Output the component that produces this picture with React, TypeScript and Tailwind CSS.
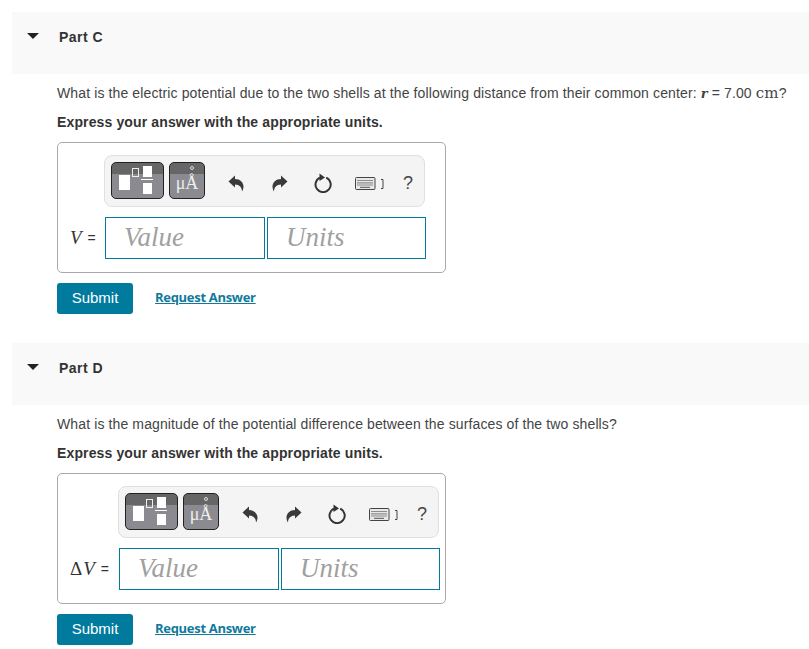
const serif = '[font-family:"Liberation_Serif",serif]';

function TemplateIcon() {
  return (
    <svg width="53" height="37" viewBox="0 0 53 37" className="block">
      <rect x="7" y="12" width="11" height="15" fill="#fff" />
      <rect x="20.5" y="5.5" width="6" height="8" fill="none" stroke="#eee" strokeWidth="1" />
      <rect x="31" y="3" width="9" height="11" fill="#fff" />
      <rect x="29" y="16" width="12" height="1" fill="#fff" />
      <rect x="31" y="20" width="9" height="11" fill="#fff" />
    </svg>
  );
}

function Undo({ flip }: { flip?: boolean }) {
  return (
    <svg width="16" height="17" viewBox="0 0 16 17" className={flip ? 'block -scale-x-100' : 'block'}>
      <path
        d="M0.5 6.5 L7 0.5 V4 C12 4 15.5 7.5 15.5 11.5 C15.5 13.5 14.8 15.2 14 16.5 C14 12.5 11.5 9.5 7 9.5 V12.5 Z"
        fill="#3a3a3a"
      />
    </svg>
  );
}

function Reset() {
  return (
    <svg width="18" height="20" viewBox="0 0 18 20" className="block">
      <path d="M6 4.6 A7.6 7.6 0 1 0 12.2 4.6" fill="none" stroke="#333" strokeWidth="2" />
      <path d="M5.5 0.5 L11 4.6 L5.5 8 Z" fill="#333" />
    </svg>
  );
}

function Keyboard() {
  return (
    <svg width="30" height="13" viewBox="0 0 30 13" className="block">
      <rect x="0.5" y="0.5" width="19.5" height="12" rx="1" fill="#e8e8e8" stroke="#444" />
      <path d="M2.5 3.5 H18 M2.5 5.8 H18 M2.5 8 H18" stroke="#333" strokeWidth="1.2" strokeDasharray="1 1" />
      <path d="M5 10.3 H15" stroke="#555" strokeWidth="1" />
      <path d="M26 2.5 H28 V11.5 H26" fill="none" stroke="#444" />
    </svg>
  );
}

function Toolbar() {
  return (
    <div className="flex h-[52px] w-[321px] items-center rounded-lg border border-[#e0e0e0] bg-[#f4f4f4] pl-[6px]">
      <div className="-mb-px h-[37px] w-[53px] -translate-y-[1px] rounded-[5px] border border-[#222] bg-[linear-gradient(#666_0,#666_30%,#8b8a90_30%,#8b8a90_100%)]">
        <TemplateIcon />
      </div>
      <div className={`relative -mb-px ml-[5px] h-[37px] w-[36px] -translate-y-[1px] rounded-[5px] border border-[#222] bg-[linear-gradient(#666_0,#666_30%,#8b8a90_30%,#8b8a90_100%)] text-center text-[18px] leading-[40px] text-[#eee] ${serif}`}>
        μÅ
        <span className="absolute left-[20px] top-[3px] h-[4px] w-[4px] rounded-full border border-[#ddd]"></span>
      </div>
      <div className="ml-[23px] mt-[4px]"><Undo /></div>
      <div className="ml-[28px] mt-[4px]"><Undo flip /></div>
      <div className="ml-[26px] mt-[4px]"><Reset /></div>
      <div className="ml-[23px] mt-[5px]"><Keyboard /></div>
      <div className="ml-[18px] mt-[4px] text-[18px] leading-none text-[#444]">?</div>
    </div>
  );
}

function AnswerBox({ prefix }: { prefix: React.ReactNode }) {
  return (
    <div className="mt-[11px] w-[389px] rounded-[5px] border border-[#aaa] pb-[13px] pl-[12px] pt-[12px]">
      <div className="grid grid-cols-[auto_auto] justify-start">
        <div></div>
        <div className="-ml-px"><Toolbar /></div>
        <div className={`mt-[10px] flex h-[42px] items-center text-[19px] text-[#333] ${serif}`}>{prefix}</div>
        <div className="mt-[10px] flex gap-[2px]">
          <div className={`flex h-[42px] w-[160px] items-center border border-[#007b9e] pb-[2px] pl-[18px] text-[27px] italic text-[#a0a0a0] ${serif}`}>Value</div>
          <div className={`flex h-[42px] w-[159px] items-center border border-[#007b9e] pb-[2px] pl-[18px] text-[27px] italic text-[#a0a0a0] ${serif}`}>Units</div>
        </div>
      </div>
    </div>
  );
}

function Part({ label, question, prefix }: { label: string; question: React.ReactNode; prefix: React.ReactNode }) {
  return (
    <section className="pl-[12px]">
      <div className="flex h-[62px] bg-[#f9f9f9] pl-[15px] pt-[17px]">
        <div className="mt-[4px] h-0 w-0 border-x-[6px] border-t-[6px] border-x-transparent border-t-[#222]"></div>
        <div className="ml-[20px] text-[14px] font-bold leading-[16px] tracking-[0.5px] text-[#333]">{label}</div>
      </div>
      <div className="pl-[45px]">
        <p className="mt-[10px] h-[18px] whitespace-nowrap text-[14px] leading-[18px] tracking-[0.12px] text-[#444]">{question}</p>
        <p className="mt-[11px] text-[14px] font-bold leading-[18px] tracking-[0.13px] text-[#333]">Express your answer with the appropriate units.</p>
        <AnswerBox prefix={prefix} />
        <div className="mt-[10px] flex items-center">
          <div className="flex h-[31px] w-[76px] items-center justify-center rounded-[3px] bg-[#007b9e] text-[15px] text-white">Submit</div>
          <div className="mb-[2px] ml-[22px] text-[13px] font-bold tracking-[-0.3px] text-[#0f7a9c] underline [font-family:'Open_Sans',sans-serif]">Request Answer</div>
        </div>
      </div>
    </section>
  );
}

export default function App() {
  return (
    <div className="h-[649px] w-[809px] overflow-hidden bg-white pt-[12px] [font-family:'Liberation_Sans',sans-serif]">
      <Part
        label="Part C"
        question={
          <>
            What is the electric potential due to the two shells at the following distance from their common center:{' '}
            <i className="text-[13px] font-bold [font-family:'DejaVu_Serif',serif]">r</i> = 7.00{' '}
            <span className="text-[15px] tracking-[0.2px] [font-family:'DejaVu_Serif',serif]">cm</span>?
          </>
        }
        prefix={
          <span className="flex w-[35px] items-center gap-[6px]">
            <i>V</i>
            <span className="text-[14px] [font-family:'Liberation_Sans',sans-serif]">=</span>
          </span>
        }
      />
      <div className="h-[29px]"></div>
      <Part
        label="Part D"
        question="What is the magnitude of the potential difference between the surfaces of the two shells?"
        prefix={
          <span className="flex w-[49px] items-center gap-[5px]">
            <span className="tracking-[1px]">Δ<i>V</i></span>
            <span className="text-[14px] [font-family:'Liberation_Sans',sans-serif]">=</span>
          </span>
        }
      />
    </div>
  );
}
